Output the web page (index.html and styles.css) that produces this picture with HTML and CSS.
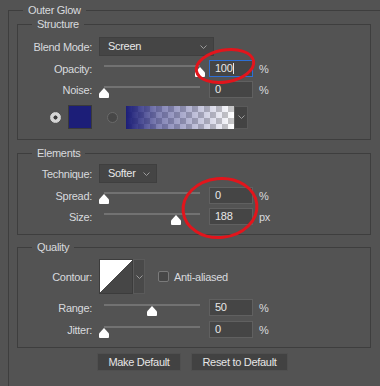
FILE: index.html
```html
<!DOCTYPE html>
<html lang="en">
<head>
    <meta charset="UTF-8">
    <title>Layer Style - Outer Glow</title>
    <link rel="stylesheet" href="styles.css">
</head>
<body>
    <div class="panel">
        <fieldset class="group outer">
            <legend>Outer Glow</legend>

            <fieldset class="group">
                <legend>Structure</legend>
                <div class="row first">
                    <span class="lbl">Blend Mode:</span>
                    <div class="select blend">Screen<svg class="chev" width="7" height="4" viewBox="0 0 7 4"><polyline points="0.5,0.5 3.5,3.5 6.5,0.5"/></svg></div>
                </div>
                <div class="row">
                    <span class="lbl">Opacity:</span>
                    <div class="slider"><div class="track"><svg class="thumb" style="left: 100%" width="10" height="10" viewBox="0 0 10 10"><path d="M5 0 L10 5.5 V9 Q10 10 9 10 H1 Q0 10 0 9 V5.5 Z"/></svg></div></div>
                    <div class="num focus">100<span class="caret"></span></div>
                    <span class="unit">%</span>
                </div>
                <div class="row">
                    <span class="lbl">Noise:</span>
                    <div class="slider"><div class="track"><svg class="thumb" style="left: 0%" width="10" height="10" viewBox="0 0 10 10"><path d="M5 0 L10 5.5 V9 Q10 10 9 10 H1 Q0 10 0 9 V5.5 Z"/></svg></div></div>
                    <div class="num">0</div>
                    <span class="unit">%</span>
                </div>
                <div class="row colors">
                    <span class="radio on"></span>
                    <span class="swatch"></span>
                    <span class="radio"></span>
                    <span class="gradient"></span>
                    <span class="grad-arrow"><svg class="chev" width="7" height="4" viewBox="0 0 7 4"><polyline points="0.5,0.5 3.5,3.5 6.5,0.5"/></svg></span>
                </div>
            </fieldset>

            <fieldset class="group elements">
                <legend>Elements</legend>
                <div class="row first">
                    <span class="lbl">Technique:</span>
                    <div class="select technique">Softer<svg class="chev" width="7" height="4" viewBox="0 0 7 4"><polyline points="0.5,0.5 3.5,3.5 6.5,0.5"/></svg></div>
                </div>
                <div class="row">
                    <span class="lbl">Spread:</span>
                    <div class="slider"><div class="track"><svg class="thumb" style="left: 0%" width="10" height="10" viewBox="0 0 10 10"><path d="M5 0 L10 5.5 V9 Q10 10 9 10 H1 Q0 10 0 9 V5.5 Z"/></svg></div></div>
                    <div class="num">0</div>
                    <span class="unit">%</span>
                </div>
                <div class="row">
                    <span class="lbl">Size:</span>
                    <div class="slider"><div class="track"><svg class="thumb" style="left: 75.2%" width="10" height="10" viewBox="0 0 10 10"><path d="M5 0 L10 5.5 V9 Q10 10 9 10 H1 Q0 10 0 9 V5.5 Z"/></svg></div></div>
                    <div class="num">188</div>
                    <span class="unit">px</span>
                </div>
            </fieldset>

            <fieldset class="group quality">
                <legend>Quality</legend>
                <div class="row first contour-row">
                    <span class="lbl">Contour:</span>
                    <span class="contour"></span>
                    <span class="contour-arrow"><svg class="chev" width="7" height="4" viewBox="0 0 7 4"><polyline points="0.5,0.5 3.5,3.5 6.5,0.5"/></svg></span>
                    <span class="check"></span>
                    <span class="check-text">Anti-aliased</span>
                </div>
                <div class="row">
                    <span class="lbl">Range:</span>
                    <div class="slider"><div class="track"><svg class="thumb" style="left: 50%" width="10" height="10" viewBox="0 0 10 10"><path d="M5 0 L10 5.5 V9 Q10 10 9 10 H1 Q0 10 0 9 V5.5 Z"/></svg></div></div>
                    <div class="num">50</div>
                    <span class="unit">%</span>
                </div>
                <div class="row">
                    <span class="lbl">Jitter:</span>
                    <div class="slider"><div class="track"><svg class="thumb" style="left: 0%" width="10" height="10" viewBox="0 0 10 10"><path d="M5 0 L10 5.5 V9 Q10 10 9 10 H1 Q0 10 0 9 V5.5 Z"/></svg></div></div>
                    <div class="num">0</div>
                    <span class="unit">%</span>
                </div>
            </fieldset>

            <div class="buttons">
                <button class="btn make">Make Default</button>
                <button class="btn reset">Reset to Default</button>
            </div>
        </fieldset>
    </div>

    <!-- red marks drawn over the screenshot -->
    <svg class="marks" width="380" height="386" viewBox="0 0 380 386">
        <ellipse cx="225" cy="66" rx="29" ry="16" transform="rotate(-10 225 66)"/>
        <ellipse cx="220" cy="208" rx="37" ry="29.5" transform="rotate(-6 220 208)"/>
    </svg>
</body>
</html>
```

FILE: styles.css
```css
* {
    margin: 0;
    padding: 0;
    box-sizing: border-box;
}

html, body {
    width: 380px;
    height: 386px;
    overflow: hidden;
}

body {
    position: relative;
    background-color: #535353;
    font-family: 'Liberation Sans', Arial, sans-serif;
    font-size: 11px;
    letter-spacing: -0.3px;
    color: #d8dade;
}

.panel {
    padding: 3px 0 0 8px;
}

.group {
    border: 1px solid #3e3e3e;
    padding: 0;
    min-width: 0;
}

.group legend {
    margin-left: 14px;
    padding: 0 5px;
    height: 14px;
    line-height: 14px;
}

/* the outer box runs off the right and bottom of the window */
.outer {
    width: 372px;
    border-right: none;
    border-bottom: none;
    padding-bottom: 15px;
}

.outer > .group {
    margin-left: 8px;
    width: 354px;
    padding-bottom: 10px;
}

.outer > .elements {
    margin-top: 6px;
    padding-bottom: 9px;
}

.outer > .quality {
    margin-top: 5px;
    padding-bottom: 9px;
}

.row {
    display: flex;
    align-items: center;
    height: 17px;
    margin-top: 4px;
}

.row.first {
    height: 19px;
    margin-top: 6px;
}

.elements .row.first {
    margin-top: 4px;
}

.quality .row {
    margin-top: 5px;
}

.lbl {
    width: 74px;
    margin-right: 7px;
    text-align: right;
}

/* dropdowns */
.select {
    position: relative;
    height: 19px;
    line-height: 17px;
    padding-left: 8px;
    background-color: #454545;
    border: 1px solid #3f3f3f;
    color: #e8e8e8;
}

.blend {
    width: 115px;
}

.technique {
    width: 58px;
}

.chev {
    fill: none;
    stroke: #9c9c9c;
    stroke-width: 1;
}

.select .chev {
    position: absolute;
    right: 6px;
    top: 7px;
}

/* sliders */
.slider {
    align-self: flex-start;
    width: 106px;
    height: 17px;
}

.track {
    position: relative;
    height: 2px;
    margin: 5px 5px 0;
    background-color: #727272;
}

.thumb {
    position: absolute;
    top: 2px;
    margin-left: -5px;
    fill: #ffffff;
}

.num {
    width: 44px;
    height: 17px;
    margin-left: 4px;
    padding-left: 5px;
    line-height: 15px;
    background-color: #454545;
    border: 1px solid #606060;
    color: #e8e8e8;
}

.num.focus {
    border-color: #2d6fd6;
}

.caret {
    display: inline-block;
    width: 1px;
    height: 11px;
    margin-left: 1px;
    vertical-align: -2px;
    background-color: #e8e8e8;
}

.unit {
    margin-left: 6px;
}

/* color / gradient row */
.colors {
    height: 24px;
    margin-top: 7px;
}

.radio {
    width: 11px;
    height: 11px;
    border-radius: 50%;
    margin-left: 15px;
    background-color: #474747;
    border: 1px solid #6a6a6a;
}

.radio.on {
    margin-left: 32px;
    background: radial-gradient(circle, #3a3a3a 0 1.8px, #d6d6d6 2.3px);
    border-color: #d6d6d6;
}

.swatch {
    width: 24px;
    height: 24px;
    margin-left: 7px;
    background-color: #1c1e78;
    border: 1px solid #3a3a3a;
}

.gradient {
    width: 108px;
    height: 23px;
    margin-left: 8px;
    background:
        linear-gradient(to right, #1c1e78, rgba(28, 30, 120, 0.55) 30%, rgba(28, 30, 120, 0)),
        conic-gradient(#c9c9c9 25%, #ffffff 0 50%, #c9c9c9 0 75%, #ffffff 0) 0 0 / 12px 12px;
}

.grad-arrow,
.contour-arrow {
    display: flex;
    align-items: center;
    justify-content: center;
    width: 14px;
    height: 23px;
    background-color: #434343;
    border: 1px solid #5a5a5a;
}

/* contour */
.quality .row.first {
    height: 35px;
    margin-top: 5px;
}

.contour {
    width: 34px;
    height: 35px;
    background: linear-gradient(to bottom right, #ffffff 50%, #464646 50%);
    border: 1px solid #3c3c3c;
}

.contour-arrow {
    width: 12px;
    height: 35px;
    background-color: #494949;
}

.check {
    width: 11px;
    height: 11px;
    margin-left: 13px;
    border: 1px solid #7a7a7a;
    border-radius: 2px;
    background-color: #474747;
}

.check-text {
    margin-left: 5px;
}

/* buttons */
.buttons {
    display: flex;
    gap: 10px;
    margin-top: 5px;
    padding-left: 88px;
}

.btn {
    height: 18px;
    font-family: inherit;
    font-size: 11px;
    letter-spacing: inherit;
    color: #e6e6e6;
    background-color: #424242;
    border: 1px solid #4f4f4f;
}

.make {
    width: 84px;
}

.reset {
    width: 97px;
}

.marks {
    position: absolute;
    top: 0;
    left: 0;
    pointer-events: none;
}

.marks ellipse {
    fill: none;
    stroke: #e2151c;
    stroke-width: 3;
}
```
